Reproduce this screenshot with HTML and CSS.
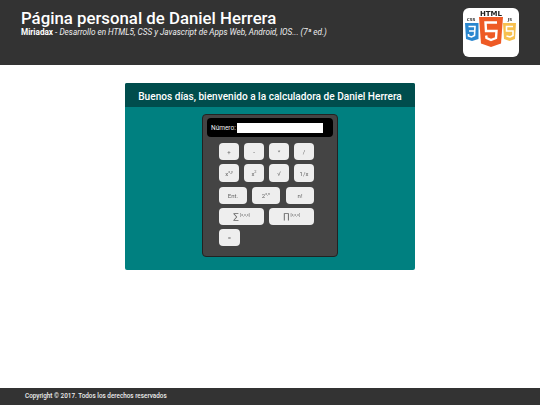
FILE: index.html
```html
<!DOCTYPE html>
<html lang="es">
<head>
<meta charset="utf-8">
<title>Calculadora</title>
<link rel="stylesheet" href="styles.css">
</head>
<body>
<header class="site-header">
  <div class="titles">
    <h1>Página personal de Daniel Herrera</h1>
    <p><strong>Miriadax</strong> - <em>Desarrollo en HTML5, CSS y Javascript de Apps Web, Android, IOS... (7ª ed.)</em></p>
  </div>
  <div class="logo">
    <svg viewBox="0 0 56 48" width="56" height="48">
      <text x="28" y="7.500" class="t-html">HTML</text>
      <text x="8" y="13" class="t-side">CSS</text>
      <text x="47" y="13" class="t-side">JS</text>
      <path d="M2 15H15.500V31L9 33L3 31Z" fill="#2a87cf"/>
      <path d="M5.500 18.500H12L11.500 27.500L8.500 29L5.500 28V26M6 23H11.500" fill="none" stroke="#fff" stroke-width="1.600"/>
      <path d="M40 15H53L52 31L46.500 33L41 31Z" fill="#f7c04e"/>
      <path d="M50 18.500H43.500V23H50V27.500L47 29L43.500 28" fill="none" stroke="#fff" stroke-width="1.600"/>
      <path d="M16 9H40L38 35.500L28 39L18 35.500Z" fill="#ee5a25"/>
      <path d="M34 14.500H22.500L23 23H33.500L33 30L28 32L23.500 30L23.200 27.500" fill="none" stroke="#fff" stroke-width="2.400"/>
    </svg>
  </div>
</header>
<main class="content">
  <section class="panel">
    <h2>Buenos días, bienvenido a la calculadora de Daniel Herrera</h2>
    <div class="panel-body">
      <div class="calc">
        <div class="display">
          <label for="num">Número:</label>
          <input id="num" type="text">
        </div>
        <div class="keys">
          <div class="row r1">
            <button class="k">+</button><button class="k">-</button><button class="k">*</button><button class="k">/</button>
          </div>
          <div class="row r2">
            <button class="k">x<sup>x,y</sup></button><button class="k">x<sup>2</sup></button><button class="k">√</button><button class="k">1/x</button>
          </div>
          <div class="row r3">
            <button class="k w28">Ent.</button><button class="k w28">2<sup>x,n</sup></button><button class="k w28">n!</button>
          </div>
          <div class="row r4">
            <button class="k w45"><span class="sym">∑</span> <sup>[x,x,x]</sup></button><button class="k w45"><span class="sym">∏</span> <sup>[x,x,x]</sup></button>
          </div>
          <div class="row r5">
            <button class="k w21">=</button>
          </div>
        </div>
      </div>
    </div>
  </section>
</main>
<footer class="site-footer">Copyright © 2017. Todos los derechos reservados</footer>
</body>
</html>
```
FILE: styles.css
```css
* { box-sizing: border-box; }
html, body { height: 100%; }
body {
  margin: 0;
  height: 405px;
  overflow: hidden;
  display: flex;
  flex-direction: column;
  background: #fff;
  font-family: Roboto, "Liberation Sans", sans-serif;
}
.site-header {
  height: 65px;
  background: #333;
  color: #fff;
  padding: 8px 21px 0 21px;
  display: flex;
  justify-content: space-between;
  align-items: flex-start;
}
.titles h1 {
  margin: 0;
  font-size: 16.800px;
  line-height: 20px;
  font-weight: 500;
}
.titles p {
  margin: -1px 0 0;
  font-size: 8.200px;
  line-height: 11px;
  color: #eee;
}
.titles strong { font-weight: 700; color: #fff; }
.logo {
  width: 56px;
  height: 49px;
  background: #fff;
  border-radius: 6px;
  overflow: hidden;
}
.logo svg { display: block; filter: blur(0.300px); }
.t-html { font: 700 7px "DejaVu Sans", sans-serif; text-anchor: middle; fill: #222; }
.t-side { font: 700 4px "DejaVu Sans", sans-serif; text-anchor: middle; fill: #333; }
.content {
  flex: 1;
  display: flex;
  justify-content: center;
  padding-top: 18px;
}
.panel {
  width: 290px;
  height: 187px;
  background: #008080;
  border-radius: 2px;
  overflow: hidden;
}
.panel h2 {
  margin: 0;
  height: 24px;
  background: #004d4d;
  color: #fff;
  font-size: 10.100px;
  line-height: 28px;
  font-weight: 500;
  text-align: center;
}
.panel-body {
  display: flex;
  justify-content: center;
  padding-top: 7px;
}
.calc {
  width: 136px;
  height: 143px;
  background: #444;
  border: 1px solid #222;
  border-radius: 4px;
  padding: 3px 4px 0;
}
.display {
  height: 19px;
  background: #000;
  border-radius: 4px;
  display: flex;
  align-items: center;
  padding-left: 4px;
  gap: 1px;
  color: #eee;
  font-size: 6.500px;
}
.display input {
  width: 86px;
  height: 10px;
  padding: 0;
  border: 0;
  background: #fff;
}
.keys {
  padding: 6px 0 0 12px;
  display: flex;
  flex-direction: column;
  gap: 4px;
}
.row { display: flex; gap: 5px; }
.r2 { margin-bottom: 1px; }
.k {
  width: 20px;
  height: 17px;
  padding: 0;
  border: 0;
  border-radius: 4px;
  background: #eee;
  color: #666;
  font: 6px Roboto, "Liberation Sans", sans-serif;
  white-space: nowrap;
  will-change: transform;
}
.k sup { font-size: 4px; line-height: 0; }
.sym { font-size: 8px; line-height: 0; font-family: "DejaVu Sans", sans-serif; }
.r2 .k { height: 18px; }
.w28 { width: 28px; }
.w45 { width: 45px; }
.w21 { width: 21px; }
.r3 .k:nth-child(3) { margin-left: 1px; }
.site-footer {
  height: 17px;
  background: #333;
  color: #eee;
  font-size: 6.350px;
  font-weight: 500;
  line-height: 17px;
  padding-left: 25px;
}
```
